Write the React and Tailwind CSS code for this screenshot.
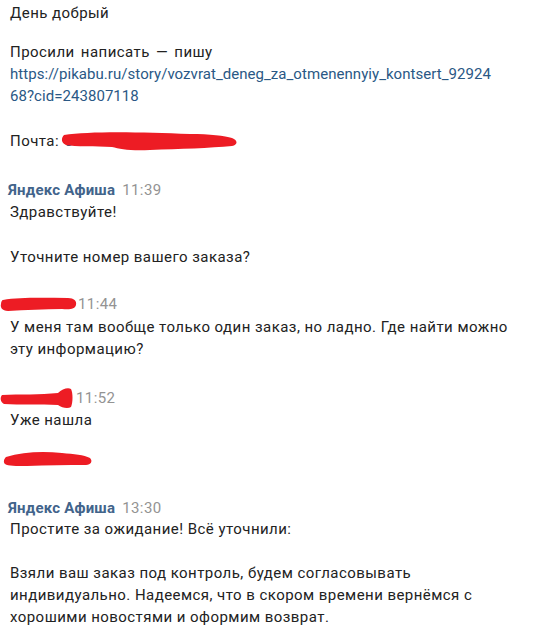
import React from "react";

function Scribble({ w = 80, h = 16, d, className = "" }) {
  return (
    <svg width={w} height={h} viewBox={`0 0 ${w} ${h}`} className={className}>
      <path d={d} fill="#ed1c24" />
    </svg>
  );
}

function Header({ name, time }) {
  return (
    <div className="flex items-center h-[24px] leading-[24px]">
      <span className="font-bold text-[15px] tracking-[0.2px] text-[#42648b] ml-[-2px]">{name}</span>
      <span className="text-[15px] tracking-[0.4px] text-[#939393] ml-[7px]">{time}</span>
    </div>
  );
}

export default function App() {
  return (
    <div
      className="w-[535px] h-[634px] bg-white overflow-hidden text-[15px] leading-[22px] tracking-[0.45px] text-[#222] pl-[10px] relative"
      style={{ fontFamily: "Roboto, 'Noto Sans', sans-serif" }}
    >
      <div className="pt-[2px]">День добрый</div>
      <div className="mt-[17px]">
        <div className="[word-spacing:2px]">Просили написать — пишу</div>
        <div className="text-[#2a5885] tracking-[0.05px]">https://pikabu.ru/story/vozvrat_deneg_za_otmenennyiy_kontsert_92924</div>
        <div className="text-[#2a5885] tracking-[0.05px]">68?cid=243807118</div>
        <div className="h-[23px]" />
        <div className="flex items-center">
          <span>Почта:</span>
          <span className="text-[#2a5885] relative ml-[6px]">
            <span>s</span>
            <Scribble
              w={180}
              h={22}
              className="absolute left-[-5px] top-[0px]"
              d="M4 5 C30 1 80 2 130 4 C150 4 165 6 172 8 C178 10 178 15 172 16 C150 18 120 19 90 20 C70 21 60 19 52 17 C35 16 15 17 6 15 C1 13 1 8 4 5 Z"
            />
          </span>
        </div>
      </div>

      <div className="mt-[26px]">
        <Header name="Яндекс Афиша" time="11:39" />
        <div className="mt-[-1px]">Здравствуйте!</div>
        <div className="h-[23px]" />
        <div>Уточните номер вашего заказа?</div>
      </div>

      <div className="mt-[24px] ml-[-10px]">
        <div className="flex items-center h-[24px]">
          <Scribble
            w={78}
            h={20}
            d="M3 6 C20 3 45 4 68 4 C74 4 77 7 76 11 C75 15 70 16 62 15 C45 15 25 16 8 17 C2 17 0 13 1 10 C1 8 2 6 3 6 Z"
          />
          <span className="text-[15px] tracking-[0.4px] text-[#939393] ml-[0px]">11:44</span>
        </div>
        <div className="pl-[10px]">
          <div>У меня там вообще только один заказ, но ладно. Где найти можно</div>
          <div>эту информацию?</div>
        </div>
      </div>

      <div className="mt-[26px] ml-[-10px]">
        <div className="flex items-center h-[24px]">
          <Scribble
            w={74}
            h={26}
            d="M2 10 C20 9 40 10 58 8 C62 4 68 2 71 4 C73 8 73 17 71 22 C68 24 62 23 58 20 C40 19 20 20 4 19 C0 17 0 12 2 10 Z"
          />
          <span className="text-[15px] tracking-[0.4px] text-[#939393] ml-[2px]">11:52</span>
        </div>
        <div className="pl-[10px] mt-[-1px]">Уже нашла</div>
      </div>

      <div className="mt-[16px] ml-[-8px] h-[24px] flex items-center">
        <Scribble
          w={92}
          h={20}
          d="M4 8 C20 3 40 2 60 4 C72 5 82 6 88 9 C91 12 89 16 84 16 C65 16 45 16 25 17 C14 17 6 17 3 15 C1 13 2 10 4 8 Z"
        />
      </div>

      <div className="mt-[25px]">
        <Header name="Яндекс Афиша" time="13:30" />
        <div className="mt-[-2px]">Простите за ожидание! Всё уточнили:</div>
        <div className="h-[22px]" />
        <div>Взяли ваш заказ под контроль, будем согласовывать</div>
        <div>индивидуально. Надеемся, что в скором времени вернёмся с</div>
        <div>хорошими новостями и оформим возврат.</div>
      </div>
    </div>
  );
}
